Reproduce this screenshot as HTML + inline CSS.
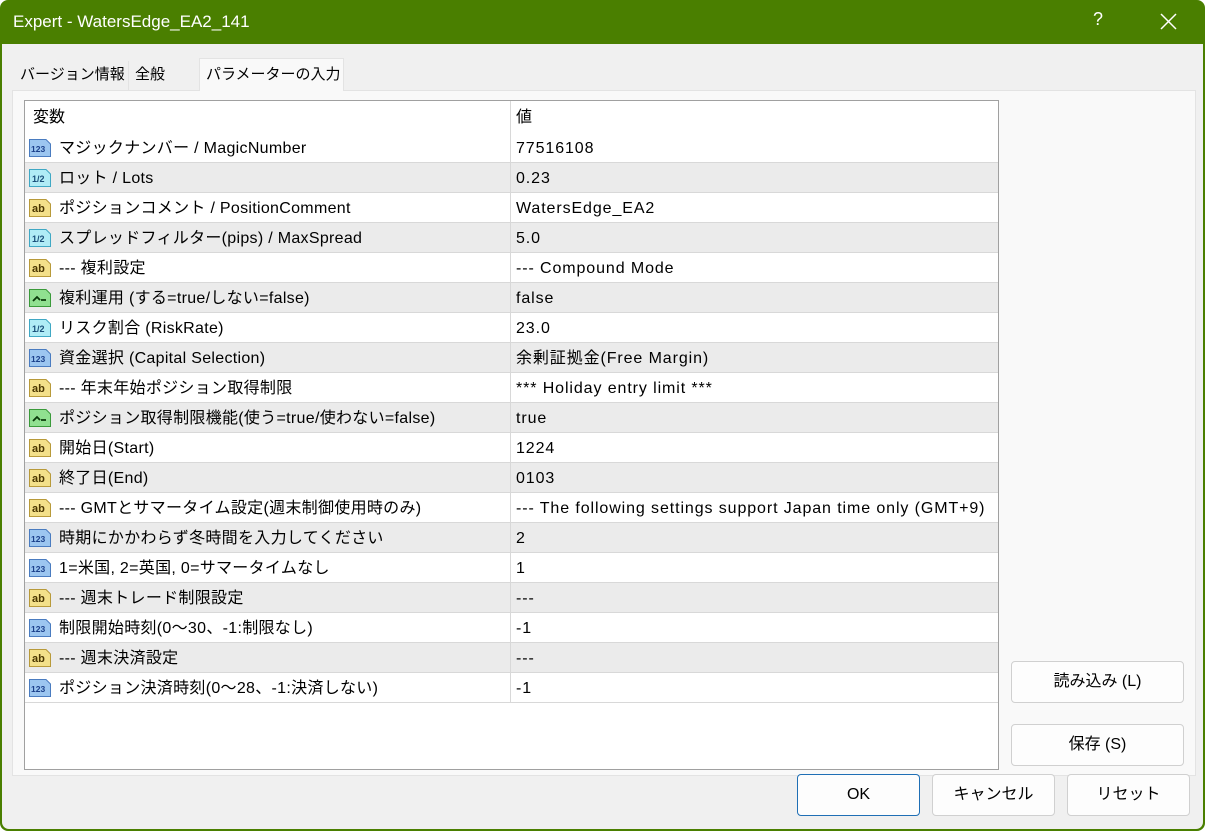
<!DOCTYPE html>
<html><head><meta charset="utf-8"><style>
*{margin:0;padding:0;box-sizing:border-box}
body{width:1205px;height:831px;background:#fff;font-family:"Liberation Sans","Noto Sans CJK JP",sans-serif;font-size:16px;color:#000;overflow:hidden;position:relative}
.win{position:absolute;left:0;top:0;width:1205px;height:831px;background:#4a7f00;border-radius:8px}
.title{position:absolute;left:13px;top:12px;color:#fff;font-size:17px}
.q{position:absolute;left:1093px;top:9px;color:#fff;font-size:18px}
.body{position:absolute;left:2px;top:44px;width:1201px;height:785px;background:#f0f0f0;border-radius:0 0 7px 7px}
.tab{position:absolute;top:17px;height:30px;line-height:28px;padding:0 6px;font-size:15px;white-space:nowrap}
.panel{position:absolute;left:10px;top:46px;width:1184px;height:686px;background:#f9f9f9;border:1px solid #e3e3e3}
.list{position:absolute;left:22px;top:56px;width:975px;height:670px;background:#fff;border:1px solid #a0a0a0;overflow:hidden}
.row{position:absolute;left:0;width:973px;height:30px;line-height:31px;border-bottom:1px solid #d8d8d8}
.row.g{background:#ebebeb}
.c1{position:absolute;left:34px;white-space:nowrap;letter-spacing:0.3px}
.c2{position:absolute;left:491px;white-space:nowrap;letter-spacing:0.9px}
.div{position:absolute;left:485px;top:0;width:1px;height:602px;background:#d8d8d8;z-index:1}
.ic{position:absolute;left:3px;top:5px}
.btn{position:absolute;background:#fdfdfd;border:1px solid #d0d0d0;border-radius:4px;text-align:center;font-size:16px}
</style></head><body>
<svg width="0" height="0" style="position:absolute">
<defs>
<symbol id="i123" viewBox="0 0 24 20"><path d="M1.5 1.5H18L22.5 6V18.5H1.5Z" fill="#9cc6f0" stroke="#4a7cc0"/><text x="3" y="14" font-family="Liberation Sans" font-weight="bold" font-size="8.5" fill="#1a3f8a">123</text></symbol>
<symbol id="ihalf" viewBox="0 0 24 20"><path d="M1.5 1.5H18L22.5 6V18.5H1.5Z" fill="#b0ecf6" stroke="#40a8c4"/><text x="4" y="14" font-family="Liberation Sans" font-weight="bold" font-size="9" fill="#1a4f7a">1/2</text></symbol>
<symbol id="iab" viewBox="0 0 24 20"><path d="M1.5 1.5H18L22.5 6V18.5H1.5Z" fill="#f3e08a" stroke="#b89a3a"/><text x="4" y="14" font-family="Liberation Sans" font-weight="bold" font-size="11" fill="#4a3600">ab</text></symbol>
<symbol id="ibool" viewBox="0 0 24 20"><path d="M1.5 1.5H18L22.5 6V18.5H1.5Z" fill="#90e090" stroke="#3a9a3a"/><path d="M5 13L9 9L12 12M13 12H18" stroke="#0a3a0a" stroke-width="1.8" fill="none"/></symbol>
</defs></svg>
<div class="win"></div>
<div class="title">Expert - WatersEdge_EA2_141</div>
<div class="q">?</div>
<svg style="position:absolute;left:1160px;top:13px" width="17" height="17"><path d="M1 1L16 16M16 1L1 16" stroke="#fff" stroke-width="1.5"/></svg>
<div class="body">
<div class="tab" style="left:12px;width:115px;background:#f0f0f0">バージョン情報</div>
<div class="tab" style="left:126px;width:72px;border-left:1px solid #e3e3e3">全般</div>
<div class="tab" style="left:197px;top:14px;height:33px;line-height:31px;width:145px;background:#f9f9f9;border:1px solid #e3e3e3;border-bottom:none;z-index:2">パラメーターの入力</div>
<div class="panel"></div>
<div class="list">
<div class="div"></div>
<div class="row" style="top:0;height:32px;line-height:34px;border-bottom:none"><span style="position:absolute;left:8px">変数</span><span class="c2">値</span></div>
<div class="row" style="top:32px"><svg class="ic" width="24" height="20"><use href="#i123"/></svg><span class="c1">マジックナンバー / MagicNumber</span><span class="c2">77516108</span></div>
<div class="row g" style="top:62px"><svg class="ic" width="24" height="20"><use href="#ihalf"/></svg><span class="c1">ロット / Lots</span><span class="c2">0.23</span></div>
<div class="row" style="top:92px"><svg class="ic" width="24" height="20"><use href="#iab"/></svg><span class="c1">ポジションコメント / PositionComment</span><span class="c2">WatersEdge_EA2</span></div>
<div class="row g" style="top:122px"><svg class="ic" width="24" height="20"><use href="#ihalf"/></svg><span class="c1">スプレッドフィルター(pips) / MaxSpread</span><span class="c2">5.0</span></div>
<div class="row" style="top:152px"><svg class="ic" width="24" height="20"><use href="#iab"/></svg><span class="c1">--- 複利設定</span><span class="c2">--- Compound Mode</span></div>
<div class="row g" style="top:182px"><svg class="ic" width="24" height="20"><use href="#ibool"/></svg><span class="c1">複利運用 (する=true/しない=false)</span><span class="c2">false</span></div>
<div class="row" style="top:212px"><svg class="ic" width="24" height="20"><use href="#ihalf"/></svg><span class="c1">リスク割合 (RiskRate)</span><span class="c2">23.0</span></div>
<div class="row g" style="top:242px"><svg class="ic" width="24" height="20"><use href="#i123"/></svg><span class="c1">資金選択 (Capital Selection)</span><span class="c2">余剰証拠金(Free Margin)</span></div>
<div class="row" style="top:272px"><svg class="ic" width="24" height="20"><use href="#iab"/></svg><span class="c1">--- 年末年始ポジション取得制限</span><span class="c2">*** Holiday entry limit ***</span></div>
<div class="row g" style="top:302px"><svg class="ic" width="24" height="20"><use href="#ibool"/></svg><span class="c1">ポジション取得制限機能(使う=true/使わない=false)</span><span class="c2">true</span></div>
<div class="row" style="top:332px"><svg class="ic" width="24" height="20"><use href="#iab"/></svg><span class="c1">開始日(Start)</span><span class="c2">1224</span></div>
<div class="row g" style="top:362px"><svg class="ic" width="24" height="20"><use href="#iab"/></svg><span class="c1">終了日(End)</span><span class="c2">0103</span></div>
<div class="row" style="top:392px"><svg class="ic" width="24" height="20"><use href="#iab"/></svg><span class="c1">--- GMTとサマータイム設定(週末制御使用時のみ)</span><span class="c2">--- The following settings support Japan time only (GMT+9)</span></div>
<div class="row g" style="top:422px"><svg class="ic" width="24" height="20"><use href="#i123"/></svg><span class="c1">時期にかかわらず冬時間を入力してください</span><span class="c2">2</span></div>
<div class="row" style="top:452px"><svg class="ic" width="24" height="20"><use href="#i123"/></svg><span class="c1">1=米国, 2=英国, 0=サマータイムなし</span><span class="c2">1</span></div>
<div class="row g" style="top:482px"><svg class="ic" width="24" height="20"><use href="#iab"/></svg><span class="c1">--- 週末トレード制限設定</span><span class="c2">---</span></div>
<div class="row" style="top:512px"><svg class="ic" width="24" height="20"><use href="#i123"/></svg><span class="c1">制限開始時刻(0〜30、-1:制限なし)</span><span class="c2">-1</span></div>
<div class="row g" style="top:542px"><svg class="ic" width="24" height="20"><use href="#iab"/></svg><span class="c1">--- 週末決済設定</span><span class="c2">---</span></div>
<div class="row" style="top:572px"><svg class="ic" width="24" height="20"><use href="#i123"/></svg><span class="c1">ポジション決済時刻(0〜28、-1:決済しない)</span><span class="c2">-1</span></div>
</div>
<div class="btn" style="left:1009px;top:617px;width:173px;height:42px;line-height:40px">読み込み (L)</div>
<div class="btn" style="left:1009px;top:680px;width:173px;height:42px;line-height:40px">保存 (S)</div>
<div class="btn" style="left:795px;top:730px;width:123px;height:42px;line-height:40px;border-color:#1f6fb5">OK</div>
<div class="btn" style="left:930px;top:730px;width:123px;height:42px;line-height:40px">キャンセル</div>
<div class="btn" style="left:1065px;top:730px;width:123px;height:42px;line-height:40px">リセット</div>
</div>
</body></html>
